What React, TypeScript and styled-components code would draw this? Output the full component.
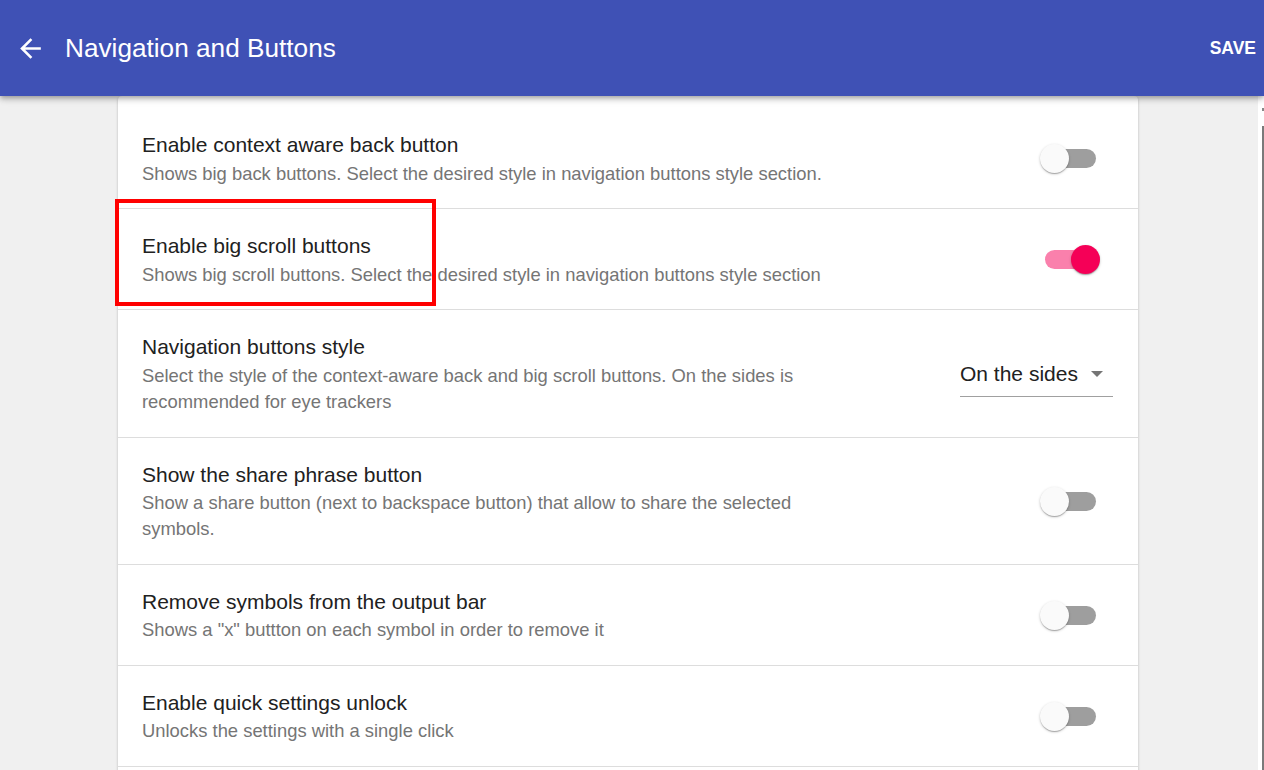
import React from "react";
import styled, { createGlobalStyle } from "styled-components";

const Global = createGlobalStyle`
  html, body {
    margin: 0;
    padding: 0;
    background: #f0f0f0;
    overflow: hidden;
    font-family: "Liberation Sans", Arial, Helvetica, sans-serif;
  }
  * { box-sizing: border-box; }
`;

const Page = styled.div`
  display: flex;
  flex-direction: column;
  width: 1264px;
  height: 770px;
  overflow: hidden;
`;

const Header = styled.header`
  position: relative;
  z-index: 2;
  height: 96px;
  flex: none;
  background: #3f51b5;
  color: #ffffff;
  display: flex;
  align-items: center;
  padding: 0 8px 0 15px;
  box-shadow: 0 2px 4px -1px rgba(0, 0, 0, 0.2), 0 4px 5px 0 rgba(0, 0, 0, 0.14),
    0 1px 10px 0 rgba(0, 0, 0, 0.12);
`;

const BackButton = styled.button`
  width: 31px;
  height: 31px;
  padding: 0;
  border: none;
  background: transparent;
  color: #ffffff;
  display: flex;
  align-items: center;
  justify-content: center;
  cursor: pointer;
`;

const Title = styled.h1`
  margin: 0 0 0 19px;
  font-size: 26.2px;
  font-weight: 400;
  line-height: 32px;
  flex: 1;
`;

const SaveButton = styled.button`
  border: none;
  background: transparent;
  color: #ffffff;
  font-family: inherit;
  font-size: 17.5px;
  font-weight: 700;
  letter-spacing: 0;
  padding: 0;
  cursor: pointer;
`;

const Main = styled.div`
  flex: 1;
  display: flex;
  min-height: 0;
`;

const Content = styled.main`
  flex: 1;
  padding-left: 118px;
  position: relative;
`;

const Card = styled.section`
  width: 1020px;
  background: #ffffff;
  border-radius: 4px 4px 0 0;
  padding: 12px 0 40px;
  box-shadow: 0 1px 3px 0 rgba(0, 0, 0, 0.2), 0 1px 1px 0 rgba(0, 0, 0, 0.14),
    0 2px 1px -1px rgba(0, 0, 0, 0.12);
`;

const Row = styled.div`
  display: flex;
  align-items: center;
  padding: 23px 25px 21.7px 24px;
  border-bottom: 1px solid #dddddd;
`;

const TextCol = styled.div`
  flex: 1;
  max-width: 695px;
`;

const RowTitle = styled.div`
  font-size: 21px;
  line-height: 28px;
  color: #212121;
`;

const RowDesc = styled.div`
  margin-top: 1.5px;
  font-size: 18.4px;
  line-height: 26px;
  color: #757575;
`;

const Control = styled.div`
  margin-left: auto;
  display: flex;
  align-items: center;
`;

const SwitchRoot = styled.div`
  position: relative;
  width: 60px;
  height: 30px;
  margin-right: 13px;
  display: flex;
  align-items: center;
`;

const Track = styled.div<{ $on: boolean }>`
  width: 51px;
  height: 19px;
  margin-left: 5px;
  border-radius: 10px;
  background: ${(p) => (p.$on ? "#fa80ac" : "#9e9e9e")};
`;

const Thumb = styled.div<{ $on: boolean }>`
  position: absolute;
  top: 0.5px;
  left: ${(p) => (p.$on ? "31px" : "0px")};
  width: 29px;
  height: 29px;
  border-radius: 50%;
  background: ${(p) => (p.$on ? "#f50057" : "#fafafa")};
  box-shadow: 0 1px 3px 0 rgba(0, 0, 0, 0.2), 0 1px 1px 0 rgba(0, 0, 0, 0.14),
    0 2px 1px -1px rgba(0, 0, 0, 0.12);
`;

const Select = styled.div`
  width: 153px;
  margin-top: 8px;
  display: flex;
  align-items: center;
  padding-bottom: 8px;
  border-bottom: 1.3px solid #a0a0a0;
  font-size: 21px;
  line-height: 28px;
  color: #212121;
`;

const SelectValue = styled.span`
  flex: 1;
`;

const Caret = styled.span`
  width: 0;
  height: 0;
  margin-right: 10px;
  border-left: 6px solid transparent;
  border-right: 6px solid transparent;
  border-top: 6px solid #757575;
`;

const Highlight = styled.div`
  position: absolute;
  left: 115px;
  top: 103px;
  width: 321px;
  height: 107px;
  border: 4px solid #ff0000;
  pointer-events: none;
`;

const Strip = styled.div`
  width: 6px;
  flex: none;
  background: #ffffff;
  display: flex;
  flex-direction: column;
  align-items: flex-end;
`;

const StripDot = styled.div`
  margin-top: 12px;
  width: 2px;
  height: 3px;
  background: #888888;
`;

const StripBar = styled.div`
  margin-top: 15px;
  flex: 1;
  width: 2px;
  background: #7a7a7a;
`;

const Switch = ({ on }: { on: boolean }) => (
  <SwitchRoot>
    <Track $on={on} />
    <Thumb $on={on} />
  </SwitchRoot>
);

type Item = {
  title: string;
  desc: string;
  control: "off" | "on" | "select";
};

const items: Item[] = [
  {
    title: "Enable context aware back button",
    desc: "Shows big back buttons. Select the desired style in navigation buttons style section.",
    control: "off",
  },
  {
    title: "Enable big scroll buttons",
    desc: "Shows big scroll buttons. Select the desired style in navigation buttons style section",
    control: "on",
  },
  {
    title: "Navigation buttons style",
    desc: "Select the style of the context-aware back and big scroll buttons. On the sides is recommended for eye trackers",
    control: "select",
  },
  {
    title: "Show the share phrase button",
    desc: "Show a share button (next to backspace button) that allow to share the selected symbols.",
    control: "off",
  },
  {
    title: "Remove symbols from the output bar",
    desc: 'Shows a "x" buttton on each symbol in order to remove it',
    control: "off",
  },
  {
    title: "Enable quick settings unlock",
    desc: "Unlocks the settings with a single click",
    control: "off",
  },
];

export default function App() {
  return (
    <>
      <Global />
      <Page>
        <Header>
          <BackButton aria-label="back">
            <svg width="31" height="31" viewBox="0 0 24 24" fill="currentColor">
              <path d="M20 11H7.83l5.59-5.59L12 4l-8 8 8 8 1.41-1.41L7.83 13H20v-2z" />
            </svg>
          </BackButton>
          <Title>Navigation and Buttons</Title>
          <SaveButton>SAVE</SaveButton>
        </Header>
        <Main>
          <Content>
            <Card>
              {items.map((it) => (
                <Row key={it.title}>
                  <TextCol>
                    <RowTitle>{it.title}</RowTitle>
                    <RowDesc>{it.desc}</RowDesc>
                  </TextCol>
                  <Control>
                    {it.control === "select" ? (
                      <Select>
                        <SelectValue>On the sides</SelectValue>
                        <Caret />
                      </Select>
                    ) : (
                      <Switch on={it.control === "on"} />
                    )}
                  </Control>
                </Row>
              ))}
            </Card>
            <Highlight />
          </Content>
          <Strip>
            <StripDot />
            <StripBar />
          </Strip>
        </Main>
      </Page>
    </>
  );
}
